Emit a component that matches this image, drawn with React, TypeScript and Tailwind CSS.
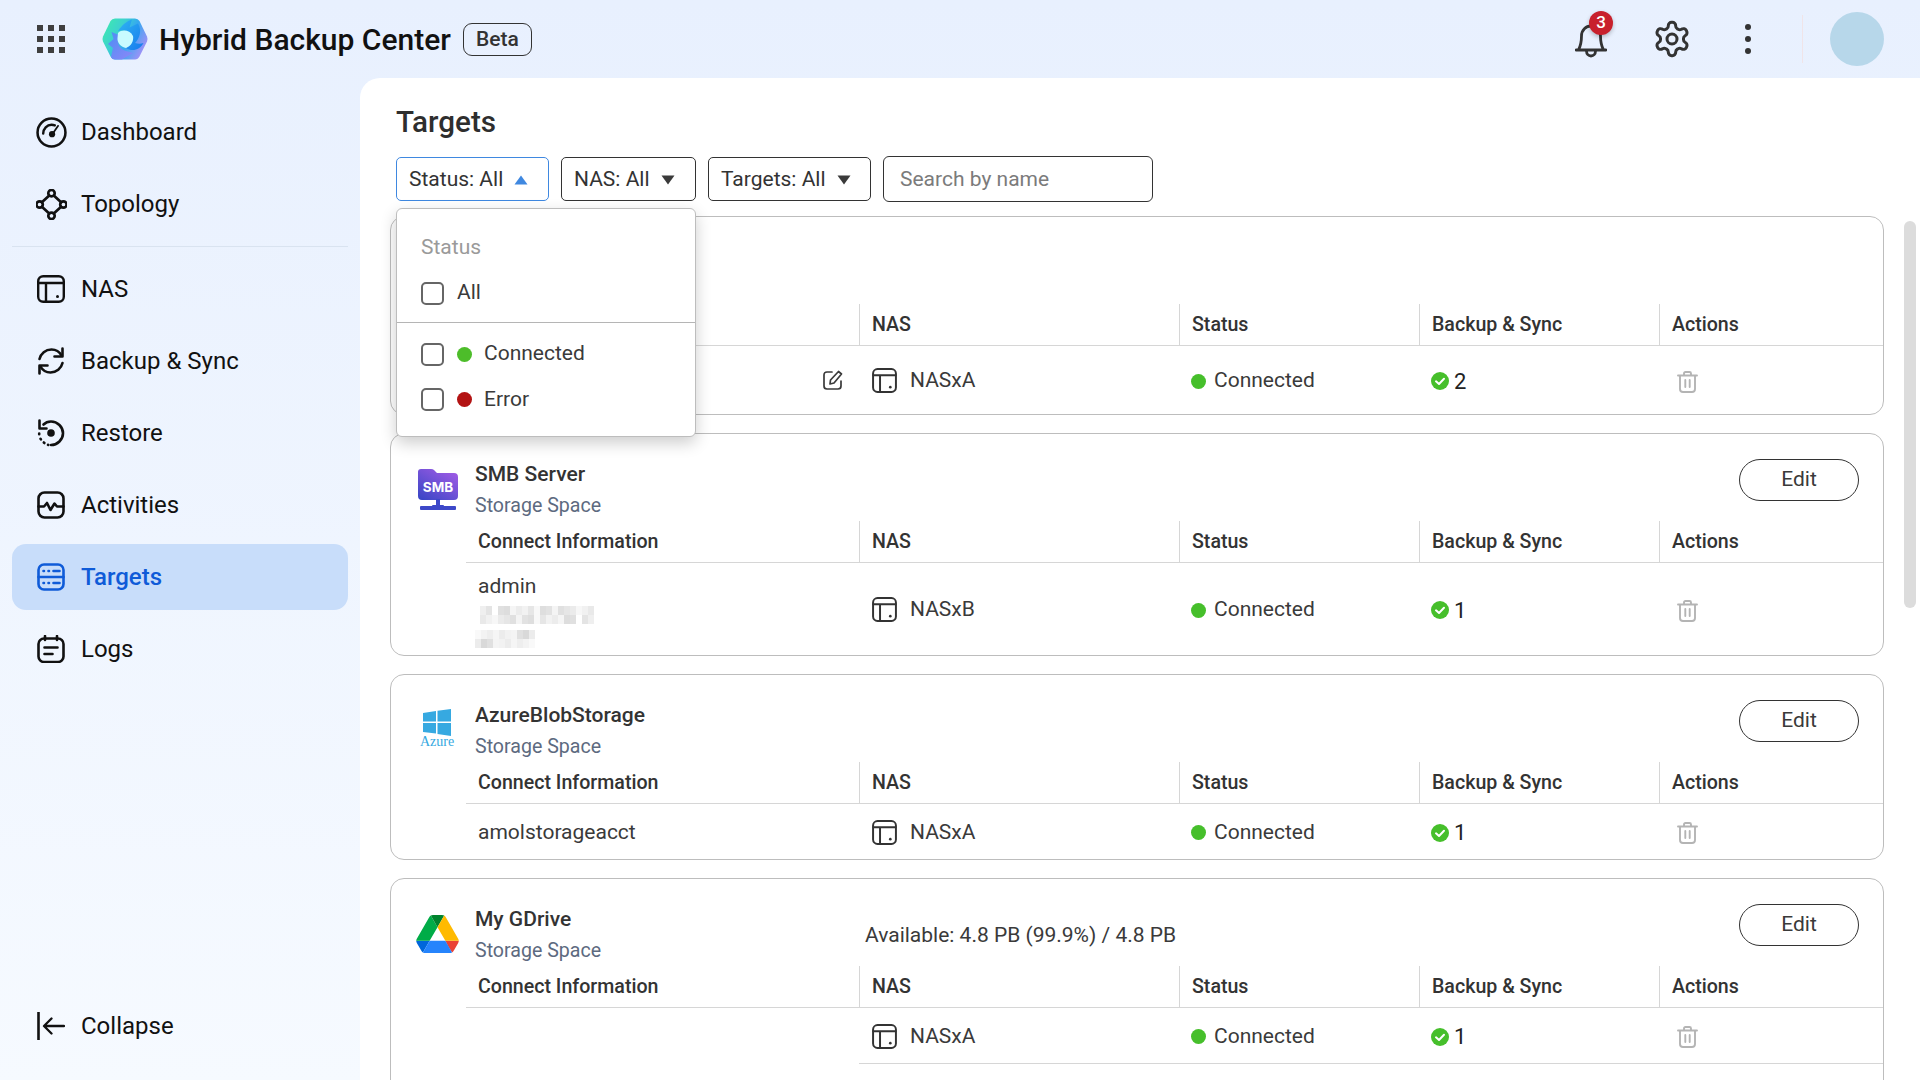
import React from "react";

const S = ({ children, size = 28, className = "", vb = 28 }: { children: React.ReactNode; size?: number; className?: string; vb?: number }) => (
  <svg width={size} height={size} viewBox={`0 0 ${vb} ${vb}`} fill="none" stroke="currentColor" strokeWidth={2.6} strokeLinecap="round" strokeLinejoin="round" className={`shrink-0 ${className}`}>
    {children}
  </svg>
);

const Grid = () => (
  <svg width="28" height="28" viewBox="0 0 28 28" fill="#3f3f3f">
    {[0, 11, 22].flatMap((y) => [0, 11, 22].map((x) => <rect key={`${x}-${y}`} x={x} y={y} width="6" height="6" />))}
  </svg>
);

const Logo = () => (
  <svg width="46" height="42" viewBox="0 0 46 42">
    <defs>
      <linearGradient id="lg1" x1="0" y1="0.3" x2="1" y2="0.8">
        <stop offset="0" stopColor="#3de6b4" />
        <stop offset="0.3" stopColor="#3dd0d0" />
        <stop offset="0.55" stopColor="#35a8f0" />
        <stop offset="1" stopColor="#b58cf8" />
      </linearGradient>
      <linearGradient id="lg2" x1="0" y1="0" x2="1" y2="1">
        <stop offset="0" stopColor="#2fb6f2" />
        <stop offset="1" stopColor="#1679ee" />
      </linearGradient>
      <linearGradient id="lg3" x1="0" y1="0" x2="1" y2="1">
        <stop offset="0" stopColor="#4b8ff4" />
        <stop offset="1" stopColor="#8d86f8" />
      </linearGradient>
    </defs>
    <path d="M13 0.5H33Q36 0.5 37.5 3L45 18.5Q46 21 45 23.5L37.5 38.5Q36 41.5 33 41.5H13Q10 41.5 8.5 38.5L1 23.5Q0 21 1 18.5L8.5 3Q10 0.5 13 0.5Z" fill="url(#lg1)" />
    <path d="M30 1.5L27.5 9.5L36 5.5C40 12 38 20 33 25C36 26 39 26 41.5 25C38 32 30 34 24 30C28 28 31 24 30 19C28 13 22 11 16 13C20 7 25 3 30 1.5Z" fill="url(#lg2)" />
    <path d="M6 26L11.5 21L9.5 14L17 17C14 24 17 31 24 33L31 35L20 41.5H13Q10 41.5 9 39L11 30Z" fill="url(#lg3)" />
    <path d="M16 15C20 11 28 12 31 18C32 23 29 28 24 30C19 29 15 25 15.5 20Z" fill="#c8fbff" />
  </svg>
);

const NasIcon = ({ size = 28, sw = 2.4 }: { size?: number; sw?: number }) => (
  <svg width={size} height={size} viewBox="0 0 28 28" fill="none" stroke="currentColor" strokeWidth={sw} strokeLinecap="round" strokeLinejoin="round">
    <rect x="1.2" y="1.2" width="25.6" height="25.6" rx="5" />
    <path d="M1.5 8H26.5M9 8V26.5" />
    <circle cx="20.5" cy="21.5" r="1.5" fill="currentColor" stroke="none" />
  </svg>
);

const nav: { label: string; icon: React.ReactNode; active?: boolean }[] = [
  {
    label: "Backup & Sync",
    icon: (
      <S>
        <path d="M2.5 12C3.8 6.5 8.5 2.5 14.5 2.5C18.8 2.5 22.5 4.8 24.5 8.5" />
        <path d="M25.5 1.5V9.5H17.5" />
        <path d="M25.5 16C24.2 21.5 19.5 25.5 13.5 25.5C9.2 25.5 5.5 23.2 3.5 19.5" />
        <path d="M2.5 26.5V18.5H10.5" />
      </S>
    ),
  },
  {
    label: "Restore",
    icon: (
      <S>
        <path d="M6.5 5.5C8.5 3.5 11 2.5 14 2.5C20.5 2.5 26 7.8 26 14.2C26 20.5 20.5 26 14 26" />
        <path d="M2.5 1.5V9.5H9.5" />
        <path d="M2.2 14.5V15.2M3.5 19.8L3.9 20.4M6.8 23.5L7.4 24M11 25.8L11.3 25.9" />
        <circle cx="14" cy="14" r="3.8" fill="currentColor" stroke="none" />
      </S>
    ),
  },
  {
    label: "Activities",
    icon: (
      <S>
        <rect x="1.5" y="1.5" width="25" height="25" rx="6" />
        <path d="M1.5 15.5H7L10 12L13.5 19L17.5 12.5L20 15.5H26.5" />
      </S>
    ),
  },
];

const NavRow = ({ label, icon, active }: { label: string; icon: React.ReactNode; active?: boolean }) => (
  <div className={`mx-[12px] flex h-[66px] items-center gap-[16px] rounded-[14px] pl-[25px] text-[24px] ${active ? "bg-[#c8ddfa] font-medium text-[#0f5bd8]" : "text-[#111111]"}`}>
    <span className="flex w-[28px] justify-center">{icon}</span>
    <span>{label}</span>
  </div>
);

const Sidebar = () => (
  <aside className="flex w-[360px] shrink-0 flex-col pt-[21px]">
    <div className="flex flex-col gap-[6px]">
      <NavRow
        label="Dashboard"
        icon={
          <S size={31}>
            <circle cx="14" cy="14" r="12.6" strokeWidth={2.3} />
            <path d="M6.5 15C6.5 10.5 10 7 14 7C15 7 16 7.2 17 7.6" strokeWidth={2.2} />
            <path d="M20 8L15.5 14.5" strokeWidth={1.6} />
            <circle cx="14.5" cy="15.5" r="2.8" fill="currentColor" stroke="none" />
          </S>
        }
      />
      <NavRow
        label="Topology"
        icon={
          <S size={31} vb={30}>
            <circle cx="15" cy="4" r="3.1" />
            <circle cx="15" cy="26" r="3.1" />
            <circle cx="3.5" cy="15" r="3.1" />
            <circle cx="26.5" cy="15" r="3.1" />
            <path d="M12.8 6.3L5.7 12.8M17.2 6.3L24.3 12.8M5.7 17.2L12.8 23.7M24.3 17.2L17.2 23.7" />
          </S>
        }
      />
    </div>
    <div className="mx-[12px] mt-[9px] mb-[9px] h-px bg-[#d9e3f0]" />
    <div className="flex flex-col gap-[6px]">
      <NavRow label="NAS" icon={<NasIcon />} />
      {nav.map((n) => (
        <NavRow key={n.label} {...n} />
      ))}
      <NavRow
        active
        label="Targets"
        icon={
          <S>
            <rect x="1.5" y="1.5" width="25" height="25" rx="5.5" />
            <path d="M1.5 14H26.5M6.5 8H7M11.5 8H12M16.5 8H22.5M6.5 20H7M11.5 20H12M16.5 20H22.5" />
          </S>
        }
      />
      <NavRow
        label="Logs"
        icon={
          <S>
            <rect x="1.5" y="3.5" width="25" height="23.5" rx="5.5" />
            <path d="M8 1V5M20 1V5M7.5 12.5H20.5M7.5 19H15.5" />
          </S>
        }
      />
    </div>
    <div className="mt-auto mb-[21px]">
      <NavRow
        label="Collapse"
        icon={
          <S>
            <path d="M1.5 0.5V27.5" strokeWidth={2.6} />
            <path d="M27 14H8M14.5 6.5L7 14L14.5 21.5" strokeWidth={2.3} />
          </S>
        }
      />
    </div>
  </aside>
);

const Caret = ({ up }: { up?: boolean }) => (
  <svg width="14" height="10" viewBox="0 0 14 10" fill={up ? "#3f88e0" : "#3a3a3a"} className="ml-[11px]">
    <path d={up ? "M7 0.5L13.5 9.5H0.5Z" : "M7 9.5L0.5 0.5H13.5Z"} />
  </svg>
);

const Filter = ({ label, up, w }: { label: string; up?: boolean; w: string }) => (
  <div className={`flex h-[44px] items-center rounded-[5px] border pl-[12px] pt-[1px] text-[21px] text-[#333333] ${w} ${up ? "border-[#3f88e0]" : "border-[#333333]"}`}>
    {label}
    <Caret up={up} />
  </div>
);

const Check = () => <span className="h-[23px] w-[23px] rounded-[5px] border-[2.5px] border-[#666666]" />;

const Dropdown = () => (
  <div className="absolute left-0 top-[51px] z-10 h-[229px] w-[300px] rounded-[6px] border border-[#bdbdbd] bg-white text-[21px] text-[#3a3a3a] shadow-[0_6px_16px_rgba(0,0,0,0.2)]">
    <div className="pl-[24px] pt-[25px] leading-[26px] text-[#9a9a9a]">Status</div>
    <div className="mt-[10px] flex h-[46px] items-center gap-[13px] pl-[24px]">
      <Check />
      All
    </div>
    <div className="mt-[6px] h-px bg-[#b5b5b5]" />
    <div className="mt-[8px] flex h-[46px] items-center pl-[24px]">
      <Check />
      <span className="ml-[13px] mr-[12px] h-[15px] w-[15px] rounded-full bg-[#4dbd2a]" />
      Connected
    </div>
    <div className="flex h-[45px] items-center pl-[24px]">
      <Check />
      <span className="ml-[13px] mr-[12px] h-[15px] w-[15px] rounded-full bg-[#b31313]" />
      Error
    </div>
  </div>
);

const SmbIcon = () => (
  <svg width="42" height="43" viewBox="0 0 42 43">
    <defs>
      <linearGradient id="smb" x1="0.1" y1="1" x2="0.9" y2="0">
        <stop offset="0" stopColor="#3a46c6" />
        <stop offset="1" stopColor="#a35ce6" />
      </linearGradient>
    </defs>
    <path d="M4 1H14Q16 1 17 2L20 5H37Q41 5 41 9V28Q41 32 37 32H5Q1 32 1 28V4Q1 1 4 1Z" fill="url(#smb)" />
    <rect x="19" y="31" width="4" height="7" fill="#3d48c8" />
    <rect x="3" y="38" width="36" height="4" rx="1" fill="#3d48c8" />
    <rect x="15" y="37" width="12" height="5" rx="1" fill="#3d48c8" />
    <text x="21" y="23.5" textAnchor="middle" fontFamily="Inter,sans-serif" fontWeight="700" fontSize="13.5" fill="#ffffff">SMB</text>
  </svg>
);

const AzureIcon = () => (
  <div className="ml-[3px] flex w-[34px] flex-col items-center">
    <svg width="28" height="27" viewBox="0 0 28 27" fill="#36a9e1">
      <path d="M0 4L13 2V12.5H0Z" />
      <path d="M14.5 1.8L28 0V12.5H14.5Z" />
      <path d="M0 14H13V24.5L0 23Z" />
      <path d="M14.5 14H28V27L14.5 25Z" />
    </svg>
    <span className="font-['Liberation_Serif',serif] text-[14px] leading-[12px] text-[#36a9e1]">Azure</span>
  </div>
);

const DriveIcon = () => (
  <svg width="43" height="38" viewBox="0 0 87.3 78" className="mt-[2px] -ml-[1px]">
    <path d="m6.6 66.85 3.85 6.65c.8 1.4 1.95 2.5 3.3 3.3l13.75-23.8h-27.5c0 1.55.4 3.1 1.2 4.5z" fill="#0066da" />
    <path d="m43.65 25-13.75-23.8c-1.35.8-2.5 1.9-3.3 3.3l-25.4 44a9.06 9.06 0 0 0 -1.2 4.5h27.5z" fill="#00ac47" />
    <path d="m73.55 76.8c1.35-.8 2.5-1.9 3.3-3.3l1.6-2.75 7.65-13.25c.8-1.4 1.2-2.95 1.2-4.5h-27.502l5.852 11.5z" fill="#ea4335" />
    <path d="m43.65 25 13.75-23.8c-1.35-.8-2.9-1.2-4.5-1.2h-18.5c-1.6 0-3.15.45-4.5 1.2z" fill="#00832d" />
    <path d="m59.8 53h-32.3l-13.75 23.8c1.35.8 2.9 1.2 4.5 1.2h50.8c1.6 0 3.15-.45 4.5-1.2z" fill="#2684fc" />
    <path d="m73.4 26.5-12.7-22c-.8-1.4-1.95-2.5-3.3-3.3l-13.75 23.8 16.15 28h27.45c0-1.55-.4-3.1-1.2-4.5z" fill="#ffba00" />
  </svg>
);

const Trash = () => (
  <svg width="21" height="22" viewBox="0 0 21 22" fill="none" stroke="#b4b4b4" strokeWidth={1.9} strokeLinecap="round" strokeLinejoin="round">
    <path d="M1 4.5H20M7 4.5V2.5Q7 1 8.5 1H12.5Q14 1 14 2.5V4.5M3 4.5V18Q3 21 6 21H15Q18 21 18 18V4.5M8.3 9V16M12.7 9V16" />
  </svg>
);

const Ok = () => (
  <svg width="18" height="18" viewBox="0 0 18 18">
    <circle cx="9" cy="9" r="9" fill="#46bf2b" />
    <path d="M5 9.3L8 12L13 6.8" fill="none" stroke="#ffffff" strokeWidth={2} strokeLinecap="round" strokeLinejoin="round" />
  </svg>
);

const th = "flex items-center border-b border-[#d6d6d6] text-[19.6px] font-medium text-[#333333]";
const col = "grid grid-cols-[393px_320px_240px_240px_1fr]";

const Table = ({ h, info, nas, count, edit, rowLine }: { h: string; info?: React.ReactNode; nas: string; count: string; edit?: boolean; rowLine?: boolean }) => {
  const line = rowLine ? "border-b border-[#d6d6d6]" : "";
  return (
    <div className="ml-[75px]">
      <div className={`${col} h-[42px]`}>
        <div className={`${th} pl-[12px]`}>Connect Information</div>
        {["NAS", "Status", "Backup & Sync", "Actions"].map((t) => (
          <div key={t} className={`${th} relative pl-[13px] before:absolute before:left-0 before:top-0 before:bottom-0 before:w-px before:bg-[#d6d6d6]`}>
            {t}
          </div>
        ))}
      </div>
      <div className={`${col} ${h} text-[21px] text-[#3a3a3a]`}>
        <div className="flex items-center justify-end pl-[12px] pr-[16px] pt-[2px]">
          {info}
          {edit && (
            <svg width="20" height="21" viewBox="0 0 20 21" fill="none" stroke="#3a3a3a" strokeWidth={1.7} strokeLinecap="round" strokeLinejoin="round" className="mb-[1px]">
              <path d="M9 2H4Q1 2 1 5V16Q1 19 4 19H15Q18 19 18 16V11" />
              <path d="M15.5 1.5L18.5 4L11 13L7 14L7.5 10Z" />
            </svg>
          )}
        </div>
        <div className={`flex items-center gap-[13px] pl-[13px] pt-[1px] ${line}`}>
          <span className="text-[#333333]">
            <NasIcon size={25} sw={2.2} />
          </span>
          <span className="mt-[1px]">{nas}</span>
        </div>
        <div className={`flex items-center gap-[8px] pl-[12px] pt-[2px] ${line}`}>
          <span className="h-[15px] w-[15px] rounded-full bg-[#46bf2b]" />
          Connected
        </div>
        <div className={`flex items-center gap-[5px] pl-[12px] pt-[2px] text-[22px] text-[#222222] ${line}`}>
          <Ok />
          {count}
        </div>
        <div className={`flex items-center pl-[18px] pt-[1px] ${line}`}>
          <span className="mt-[2px]">
            <Trash />
          </span>
        </div>
      </div>
    </div>
  );
};

const Head = ({ icon, name, avail }: { icon?: React.ReactNode; name?: string; avail?: string }) => (
  <div className="flex h-[87px] items-start pl-[26px] pr-[24px] pt-[25px]">
    <div className="mt-[9px] w-[58px] shrink-0">{icon}</div>
    <div className="w-[390px] shrink-0">
      {name && (
        <>
          <div className="mt-[1px] text-[21px] font-medium leading-[28px] text-[#333333]">{name}</div>
          <div className="mt-[2px] text-[19.6px] leading-[32px] text-[#5d6a80]">Storage Space</div>
        </>
      )}
    </div>
    <div className="mt-[17px] flex-1 text-[21px] leading-[28px] text-[#3a3a3a]">{avail}</div>
    {name && <div className="flex h-[42px] w-[120px] items-center justify-center rounded-full border border-[#333333] text-[21px] text-[#3a3a3a]">Edit</div>}
  </div>
);

const Blur = ({ cells }: { cells: string[] }) => (
  <div className="flex h-[9px]">
    {cells.map((c, i) => (
      <span key={i} className="h-[9px] w-[6px]" style={{ background: c }} />
    ))}
  </div>
);

const SmbInfo = () => {
  const a = "#efefef #e4e4e4 #ffffff #e0e0e0 #dddddd #f5f5f5 #ececec #f2f2f2 #e6e6e6 #f8f8f8 #dedede #e2e2e2 #f4f4f4 #e0e0e0 #e6e6e6 #ebebeb #f7f7f7 #f1f1f1 #e9e9e9".split(" ");
  const b = "#f9f9f9 #f3f3f3 #eeeeee #f5f5f5 #ececec #f2f2f2 #f4f4f4 #e0e0e0 #d9d9d9 #ececec".split(" ");
  return (
    <div className="mr-auto -mt-[1px] flex w-full flex-col">
      <div className="leading-[28px]">admin</div>
      <div className="mt-[6px] ml-[2px]">
        <Blur cells={a} />
        <Blur cells={a.slice().reverse()} />
      </div>
      <div className="mt-[6px] -ml-[3px]">
        <Blur cells={b} />
        <Blur cells={b.slice().reverse()} />
      </div>
    </div>
  );
};

const Card = ({ children, open }: { children: React.ReactNode; open?: boolean }) => (
  <section className={`w-[1494px] shrink-0 rounded-[14px] border border-[#bdbdbd] bg-white ${open ? "h-[260px]" : ""}`}>{children}</section>
);

const Main = () => (
  <main className="relative flex-1 overflow-hidden rounded-tl-[20px] bg-white">
    <div className="pl-[36px] pt-[22px]">
      <h1 className="text-[29.6px] font-medium leading-[44px] text-[#2e2e2e]">Targets</h1>
      <div className="relative mt-[13px] flex h-[44px] items-center gap-[12px]">
        <Filter label="Status: All" up w="w-[153px]" />
        <Filter label="NAS: All" w="w-[135px]" />
        <Filter label="Targets: All" w="w-[163px]" />
        <div className="flex h-[46px] w-[270px] items-center rounded-[6px] border border-[#333333] pl-[16px] pt-[1px] text-[21px] text-[#7b7b7b]">Search by name</div>
        <Dropdown />
      </div>
    </div>
    <div className="ml-[30px] mt-[15px] flex flex-col gap-[18px]">
      <Card>
        <Head />
        <Table h="h-[68px]" nas="NASxA" count="2" edit />
      </Card>
      <Card>
        <Head icon={<SmbIcon />} name="SMB Server" />
        <Table h="h-[92px]" nas="NASxB" count="1" info={<SmbInfo />} />
      </Card>
      <Card>
        <Head icon={<AzureIcon />} name="AzureBlobStorage" />
        <Table h="h-[55px]" nas="NASxA" count="1" info={<div className="w-full">amolstorageacct</div>} />
      </Card>
      <Card open>
        <Head icon={<DriveIcon />} name="My GDrive" avail="Available: 4.8 PB (99.9%) / 4.8 PB" />
        <Table h="h-[56px]" nas="NASxA" count="1" rowLine />
      </Card>
    </div>
    <div className="absolute right-[4px] top-[143px] h-[387px] w-[12px] rounded-full bg-[#dcdcdc]" />
  </main>
);

const Header = () => (
  <header className="flex h-[78px] shrink-0 items-center pl-[37px] pr-[36px]">
    <Grid />
    <div className="ml-[37px]">
      <Logo />
    </div>
    <span className="ml-[11px] text-[30px] font-medium text-[#111111]">Hybrid Backup Center</span>
    <span className="ml-[12px] flex h-[33px] w-[69px] items-center justify-center rounded-[9px] border border-[#333333] pt-[2px] text-[21px] font-medium text-[#333333]">Beta</span>
    <div className="ml-auto flex items-center">
      <div className="relative mr-[45px] text-[#333333]">
        <svg width="32" height="36" viewBox="0 0 32 36" fill="none" stroke="currentColor" strokeWidth={2.8} strokeLinecap="round" strokeLinejoin="round" className="mt-[4px]">
          <path d="M1 27H31M3.5 27C6 22 6.5 17 6.5 13C6.5 7 11 3 16 3C21 3 25.5 7 25.5 13C25.5 17 26 22 28.5 27" />
          <path d="M11.5 28C11.5 31 13.5 33 16 33C18.5 33 20.5 31 20.5 28" />
        </svg>
        <span className="absolute -right-[6px] -top-[8px] flex h-[24px] w-[24px] items-center justify-center rounded-full bg-[#c8202c] text-[17px] font-medium text-white shadow-[0_2px_4px_rgba(0,0,0,0.25)]">3</span>
      </div>
      <svg width="40" height="40" viewBox="0 0 24 24" fill="none" stroke="#333333" strokeWidth={1.8} strokeLinecap="round" strokeLinejoin="round" className="mr-[53px]">
        <path d="M12.22 2h-.44a2 2 0 0 0-2 2v.18a2 2 0 0 1-1 1.73l-.43.25a2 2 0 0 1-2 0l-.15-.08a2 2 0 0 0-2.73.73l-.22.38a2 2 0 0 0 .73 2.73l.15.1a2 2 0 0 1 1 1.72v.51a2 2 0 0 1-1 1.74l-.15.09a2 2 0 0 0-.73 2.73l.22.38a2 2 0 0 0 2.73.73l.15-.08a2 2 0 0 1 2 0l.43.25a2 2 0 0 1 1 1.73V20a2 2 0 0 0 2 2h.44a2 2 0 0 0 2-2v-.18a2 2 0 0 1 1-1.73l.43-.25a2 2 0 0 1 2 0l.15.08a2 2 0 0 0 2.73-.73l.22-.39a2 2 0 0 0-.73-2.73l-.15-.08a2 2 0 0 1-1-1.74v-.5a2 2 0 0 1 1-1.74l.15-.09a2 2 0 0 0 .73-2.73l-.22-.38a2 2 0 0 0-2.73-.73l-.15.08a2 2 0 0 1-2 0l-.43-.25a2 2 0 0 1-1-1.73V4a2 2 0 0 0-2-2z" />
        <circle cx="12" cy="12" r="3" />
      </svg>
      <div className="mr-[51px] flex w-[6px] flex-col gap-[6px]">
        <span className="h-[6px] w-[6px] rounded-full bg-[#333333]" />
        <span className="h-[6px] w-[6px] rounded-full bg-[#333333]" />
        <span className="h-[6px] w-[6px] rounded-full bg-[#333333]" />
      </div>
      <div className="mr-[27px] h-[48px] w-px bg-[#f0e4e8]" />
      <div className="h-[54px] w-[54px] rounded-full bg-[#b7d7ea]" />
    </div>
  </header>
);

export default function App() {
  return (
    <div className="flex h-screen w-full flex-col overflow-hidden bg-gradient-to-b from-[#e8f0fe] to-[#f6faff] font-['Roboto',sans-serif]">
      <Header />
      <div className="flex min-h-0 flex-1">
        <Sidebar />
        <Main />
      </div>
    </div>
  );
}
